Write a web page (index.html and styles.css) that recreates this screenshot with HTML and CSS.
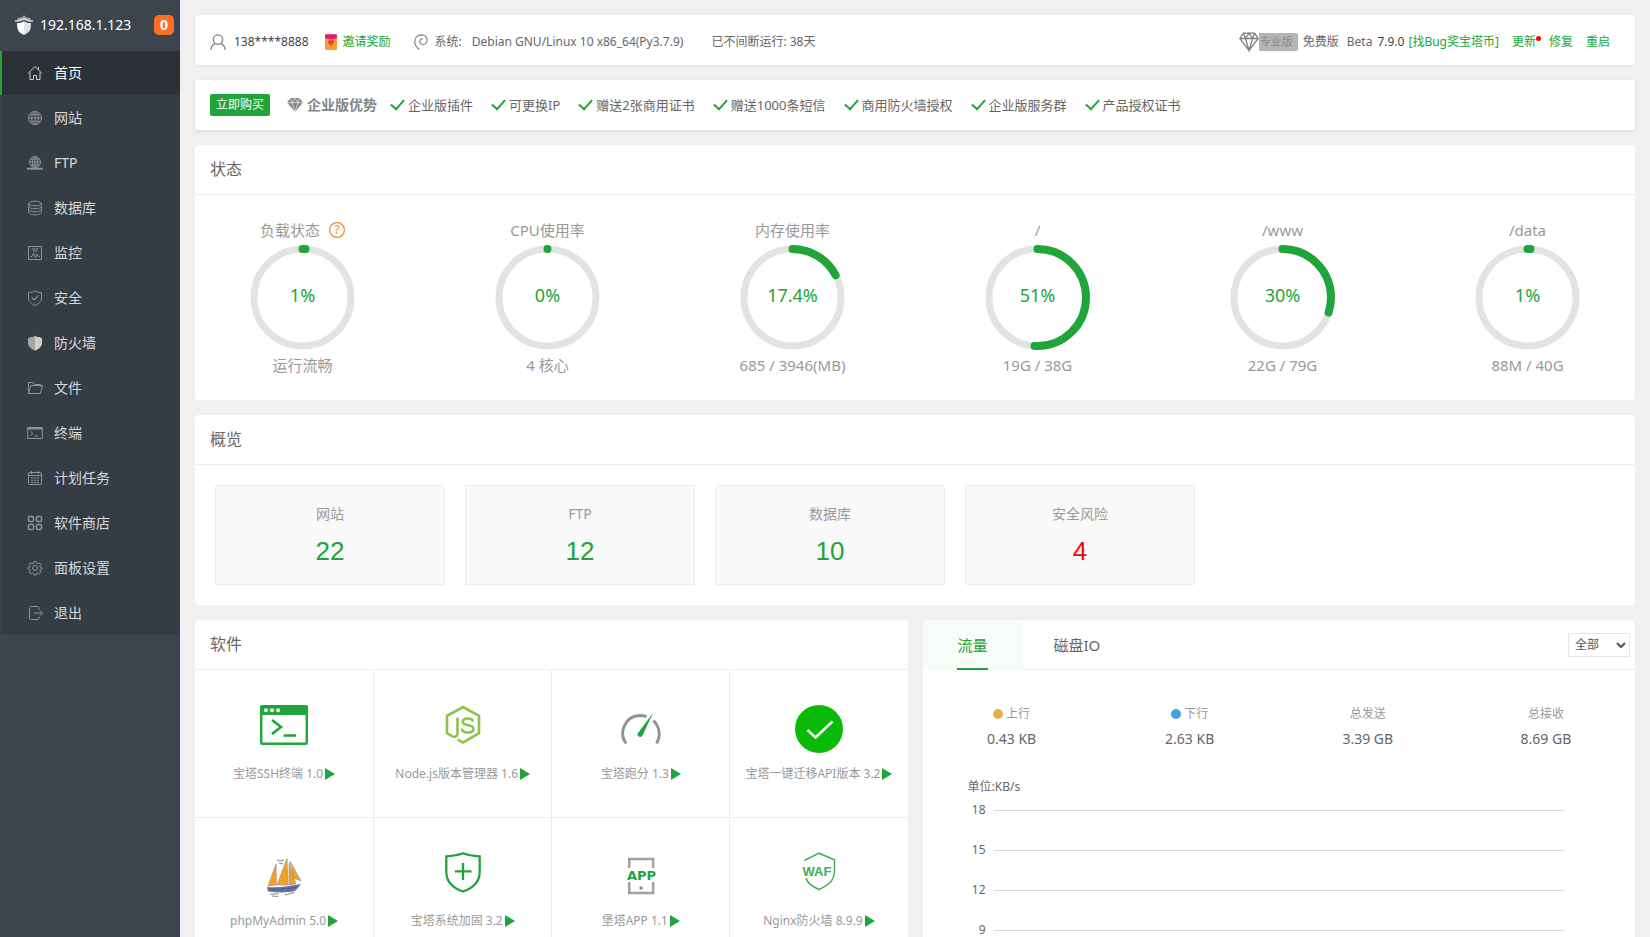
FILE: index.html
```html
<!DOCTYPE html>
<html lang="zh-CN">
<head>
<meta charset="utf-8">
<title>服务器面板</title>
<link rel="stylesheet" href="styles.css">
</head>
<body>
<div class="app">
  <aside class="sidebar">
    <div class="brand">
      <svg class="brand-logo" viewBox="0 0 18 20"><path d="M9 0l1.500 2.200 5 1V5h-13V3.200l5-1z" fill="#a9acaf"/><path d="M0 5.200C4 5.200 6.500 4.300 9 3c2.500 1.300 5 2.200 9 2.200v1.600C14 7 11.500 6.300 9 5 6.500 6.300 4 7 0 6.800z" fill="#c9cbcd"/><path d="M2 8c3 0 5-.5 7-1.800V20c-4-2-6.500-4-6.700-7.500z" fill="#fff"/><path d="M16 8c-3 0-5-.5-7-1.800V20c4-2 6.500-4 6.700-7.500z" fill="#e2e2e2"/></svg>
      <span class="brand-ip">192.168.1.123</span>
      <span class="brand-badge">0</span>
    </div>
    <nav class="menu">
      <a class="menu-item active" href="#"><svg viewBox="0 0 16 16"><path d="M1 8.500 8 1.500l7 7M3 7.500V14.500h3.500v-4h3v4H13V7.500M11.500 2v2.500"/></svg>首页</a>
      <a class="menu-item" href="#"><svg viewBox="0 0 16 16"><circle cx="8" cy="8" r="6.500"/><ellipse cx="8" cy="8" rx="3.300" ry="6.500"/><path d="M1.500 8h13M8 1.500v13M2.500 4.700h11M2.500 11.300h11"/></svg>网站</a>
      <a class="menu-item" href="#"><svg viewBox="0 0 16 16"><circle cx="8" cy="7" r="5.500"/><ellipse cx="8" cy="7" rx="2.600" ry="5.500"/><path d="M2.500 7h11M8 1.500v11M3.500 4.200h9M3.500 9.800h9"/><path d="M0 13.700h16" stroke-width="2"/></svg>FTP</a>
      <a class="menu-item" href="#"><svg viewBox="0 0 16 16"><ellipse cx="8" cy="3.500" rx="6.300" ry="2.300"/><path d="M1.700 3.500v9c0 1.300 2.800 2.300 6.300 2.300s6.300-1 6.300-2.300v-9M1.700 6.500C2 7.800 4.500 8.800 8 8.800s6-1 6.300-2.300M1.700 9.500c.3 1.300 2.800 2.300 6.300 2.300s6-1 6.300-2.300"/></svg>数据库</a>
      <a class="menu-item" href="#"><svg viewBox="0 0 16 16"><path d="M1.500 1.500h13v13h-13zM4.500 4h7M6 6h4M3 12l2-.5 1.500-3.500 2 4.500L10 9l1.500 2.500H13"/></svg>监控</a>
      <a class="menu-item" href="#"><svg viewBox="0 0 16 16"><path d="M8 .7c2 1.300 4 1.900 6.500 2V8c0 3.500-2.500 5.800-6.500 7.500C4 13.800 1.500 11.500 1.500 8V2.700C4 2.600 6 2 8 .7z"/><path d="M4.800 7.700 7.200 10l4-4.500" stroke="#bbb"/></svg>安全</a>
      <a class="menu-item" href="#"><svg viewBox="0 0 16 16"><path d="M8 .5 6 2 3.500 2 1 3.500V8c0 3.500 3 6 7 7.800z" fill="#a5a5a1" stroke="none"/><path d="M8 .5 10 2l2.500 0L15 3.500V8c0 3.500-3 6-7 7.800z" fill="#cfcfc8" stroke="none"/></svg>防火墙</a>
      <a class="menu-item" href="#"><svg viewBox="0 0 16 16"><path d="M1.500 13.500v-11h4.500l1.500 2h6v2M1.500 13.500 4 5.500h11.500L13.500 13.500z"/></svg>文件</a>
      <a class="menu-item" href="#"><svg viewBox="0 0 16 16"><path d="M.7 2.500h14.600v11H.7zM3.500 6.500 6 8.500l-2.500 2M7.500 11H11"/><path d="M.7 3.500h14.600" stroke-width="2"/></svg>终端</a>
      <a class="menu-item" href="#"><svg viewBox="0 0 16 16"><rect x="1.500" y="2.500" width="13" height="12" rx="1.500"/><path d="M1.500 5.500h13M4.500 1v3M11.500 1v3"/><path d="M4 8h8M4 10.300h8M4 12.500h8" stroke-dasharray="2 1"/></svg>计划任务</a>
      <a class="menu-item" href="#"><svg viewBox="0 0 16 16"><g stroke-width="1.500"><rect x="1.500" y="1.500" width="5" height="5" rx="1"/><rect x="9.500" y="1.500" width="5" height="5" rx="1"/><rect x="1.500" y="9.500" width="5" height="5" rx="1"/><rect x="9.500" y="9.500" width="5" height="5" rx="1"/></g></svg>软件商店</a>
      <a class="menu-item" href="#"><svg viewBox="0 0 16 16"><circle cx="8" cy="8" r="2.500"/><path d="M6.900 1.500h2.200l.5 1.900 1 .4 1.700-1 1.500 1.500-1 1.700.4 1 1.800.5v1.500l-1.800.6-.4 1 1 1.600-1.500 1.600-1.700-1-1 .4-.5 1.800H6.900l-.5-1.800-1-.4-1.700 1-1.500-1.600 1-1.600-.4-1L1 9V7.500L2.800 7l.4-1-1-1.700 1.500-1.500 1.700 1 1-.4z"/></svg>面板设置</a>
      <a class="menu-item" href="#"><svg viewBox="0 0 16 16"><path d="M12 4.500v-2L11 1.500H3.500l-1 1v11l1 1H11l1-1v-2M7 8h8.500M13 5.500 15.500 8 13 10.500"/></svg>退出</a>
    </nav>
  </aside>

  <main class="main">
    <header class="card topbar">
      <div class="topbar-group">
        <svg class="icon-user" viewBox="0 0 16 16"><circle cx="8" cy="5.500" r="4.700"/><path d="M.8 16c.2-3 2-5.500 4.500-6.500M15.200 16c-.2-3-2-5.500-4.500-6.500"/></svg>
        <span class="account">138****8888</span>
        <a class="link invite" href="#"><svg viewBox="0 0 12 16"><rect y="1" width="12" height="15" rx="1.500" fill="#f5a02c"/><path d="M0 4V1.500C0 .7.700.3 1.500.3h9c.8 0 1.500.4 1.500 1.200V4C8 5.800 4 5.800 0 4z" fill="#e9176b"/><path d="M3.500 6.500h5v2.300L6 12 3.500 8.800z" fill="#e9174f"/><path d="M6 7.500v3" stroke="#f5a02c"/></svg>邀请奖励</a>
      </div>
      <div class="topbar-group sys">
        <svg class="icon-os" viewBox="0 0 14 16"><path d="M5.500 15.500C2 13 .6 10.500.8 7.200 1 3.500 3.800.9 7.500.8c3.600 0 5.700 2.500 5.600 5.500-.1 2.500-2 4.200-4 4.200-2.200 0-3.300-1.500-3.200-3.200.1-1.600 1.300-2.500 2.800-2.400"/></svg>
        <span>系统:</span><span class="os-name">Debian GNU/Linux 10 x86_64(Py3.7.9)</span>
      </div>
      <span>已不间断运行: 38天</span>
      <div class="topbar-right">
        <button class="pro" type="button"><svg viewBox="0 0 20 20"><path d="M4.500 1.200h11l3.700 5.300L10 18.500.8 6.500zM.8 6.500h18.400M4.500 1.200 6.500 6.500 10 18.500 13.500 6.500l2-5.300M6.500 6.500 10 1.200l3.500 5.300"/></svg><span>专业版</span></button>
        <span class="edition">免费版</span>
        <span class="beta">Beta</span>
        <span class="version">7.9.0</span>
        <a class="link bug" href="#">[找Bug奖宝塔币]</a>
        <a class="link update" href="#">更新</a>
        <a class="link repair" href="#">修复</a>
        <a class="link" href="#">重启</a>
      </div>
    </header>

    <section class="card promo">
      <button class="buy" type="button">立即购买</button>
      <strong class="promo-title"><svg viewBox="0 0 16 14"><path d="M3.500 0h9L16 4.500 8 14 0 4.500z" fill="#84868a"/><path d="M0 4.700h16M3.500 0 5 4.700 8 14 11 4.700 12.500 0M5 4.700 8 .5l3 4.200" fill="none" stroke="#fff" stroke-width=".6"/></svg>企业版优势</strong>
      <ul class="perks">
        <li>企业版插件</li><li>可更换IP</li><li>赠送2张商用证书</li><li>赠送1000条短信</li><li>商用防火墙授权</li><li>企业版服务群</li><li>产品授权证书</li>
      </ul>
    </section>

    <section class="card">
      <h2 class="card-title">状态</h2>
      <div class="gauges">
        <div class="gauge"><div class="gauge-name">负载状态<svg class="help" viewBox="0 0 16 16"><circle cx="8" cy="8" r="7.400" fill="none" stroke="#f0882b" stroke-width="1.200"/><text x="8" y="12" text-anchor="middle">?</text></svg></div>
          <div class="dial"><svg viewBox="0 0 105 105"><circle class="track" cx="52.500" cy="52.500" r="48.500"/><circle class="value" cx="52.500" cy="52.500" r="48.500" pathLength="100" stroke-dasharray="1 100"/></svg><b>1%</b></div><div class="gauge-name">运行流畅</div></div>
        <div class="gauge"><div class="gauge-name">CPU使用率</div>
          <div class="dial"><svg viewBox="0 0 105 105"><circle class="track" cx="52.500" cy="52.500" r="48.500"/><circle class="value" cx="52.500" cy="52.500" r="48.500" pathLength="100" stroke-dasharray="0.01 100"/></svg><b>0%</b></div><div class="gauge-name">4 核心</div></div>
        <div class="gauge"><div class="gauge-name">内存使用率</div>
          <div class="dial"><svg viewBox="0 0 105 105"><circle class="track" cx="52.500" cy="52.500" r="48.500"/><circle class="value" cx="52.500" cy="52.500" r="48.500" pathLength="100" stroke-dasharray="17.4 100"/></svg><b>17.4%</b></div><div class="gauge-name">685 / 3946(MB)</div></div>
        <div class="gauge"><div class="gauge-name">/</div>
          <div class="dial"><svg viewBox="0 0 105 105"><circle class="track" cx="52.500" cy="52.500" r="48.500"/><circle class="value" cx="52.500" cy="52.500" r="48.500" pathLength="100" stroke-dasharray="51 100"/></svg><b>51%</b></div><div class="gauge-name">19G / 38G</div></div>
        <div class="gauge"><div class="gauge-name">/www</div>
          <div class="dial"><svg viewBox="0 0 105 105"><circle class="track" cx="52.500" cy="52.500" r="48.500"/><circle class="value" cx="52.500" cy="52.500" r="48.500" pathLength="100" stroke-dasharray="30 100"/></svg><b>30%</b></div><div class="gauge-name">22G / 79G</div></div>
        <div class="gauge"><div class="gauge-name">/data</div>
          <div class="dial"><svg viewBox="0 0 105 105"><circle class="track" cx="52.500" cy="52.500" r="48.500"/><circle class="value" cx="52.500" cy="52.500" r="48.500" pathLength="100" stroke-dasharray="1 100"/></svg><b>1%</b></div><div class="gauge-name">88M / 40G</div></div>
      </div>
    </section>

    <section class="card">
      <h2 class="card-title">概览</h2>
      <div class="overview">
        <div class="stat"><span>网站</span><a href="#">22</a></div>
        <div class="stat"><span>FTP</span><a href="#">12</a></div>
        <div class="stat"><span>数据库</span><a href="#">10</a></div>
        <div class="stat"><span>安全风险</span><a class="danger" href="#">4</a></div>
      </div>
    </section>

    <div class="columns">
      <section class="card">
        <h2 class="card-title soft-title">软件</h2>
        <div class="apps">
          <div class="app-cell"><svg viewBox="0 0 48 48"><rect x="1.200" y="1.200" width="45.600" height="37.600" rx="1" fill="#fff" stroke="#20a53a" stroke-width="2.400"/><path d="M0 1h48v9H0z" fill="#20a53a"/><g fill="#fff"><circle cx="6" cy="5.200" r="2"/><circle cx="12" cy="5.200" r="2"/><circle cx="18" cy="5.200" r="2"/></g><path d="M12 15l9 7-9 7M23.500 30.500H36" fill="none" stroke="#20a53a" stroke-width="2.600"/></svg><span class="app-name">宝塔SSH终端 1.0</span></div>
          <div class="app-cell"><svg viewBox="0 0 48 48"><g fill="none" stroke="#8cc34b" stroke-width="2.600"><path d="M18.500 12.500v15.500c0 3.500-2.500 4.500-5 3.300L8 28.200V10.800L24 2l16 8.800v17.400L24 37.500l-5.500-3.200"/><path d="M34 16.500c-.3-2-2-3-5-3-3.200 0-5.300 1-5.300 3.300 0 5 10.800 1.800 10.800 7 0 2.500-2 3.700-5.500 3.700-4 0-6-1.300-6.300-3.800"/></g></svg><span class="app-name">Node.js版本管理器 1.6</span></div>
          <div class="app-cell"><svg viewBox="0 0 48 48"><path d="M9 38.500C1.500 28 7.500 11 23 10.500c2.500 0 4 .3 6.500 1M36.500 15.500c6 6.500 7.500 15 3 23" fill="none" stroke="#919191" stroke-width="3"/><path d="M36 8 25.500 30.500c-2 3-6 .8-4.700-2.200z" fill="#20a53a"/></svg><span class="app-name">宝塔跑分 1.3</span></div>
          <div class="app-cell"><svg viewBox="0 0 48 48"><circle cx="24" cy="24" r="24" fill="#09bb07"/><path d="M12.500 25l8 7.500 17-16" fill="none" stroke="#fff" stroke-width="2.500"/></svg><span class="app-name">宝塔一键迁移API版本 3.2</span></div>
          <div class="app-cell"><svg viewBox="0 0 48 48"><g fill="#f2a128" stroke="#8d8d8d" stroke-width=".6"><path d="M8 34 16 12l.5 21zM17 33 27 6.500 28 33zM29 33V11l7 21zM30 9l11 20-7-3z"/></g><path d="M7 35c12 1 22-1 34-3-2 3-4 5-6 7-9 2-18 1.500-27 .5z" fill="#6274a8"/><path d="M8 37c10 1 20 0 29-2" fill="none" stroke="#465a90"/><path d="M17 8l4 1 3-1M19 11l4 1M10 42c3 1 5-1 9 0M12 44l6 .5M25 43l9-2.500" fill="none" stroke="#8b8d95" stroke-width="1.200"/></svg><span class="app-name">phpMyAdmin 5.0</span></div>
          <div class="app-cell"><svg viewBox="0 0 48 48"><path d="M24 1.300c5 2 10 2.700 16.700 3V20C40.700 30 34 36 24 39.500 14 36 7.300 30 7.300 20V4.300C14 4 19 3.300 24 1.300z" fill="none" stroke="#20a53a" stroke-width="2.300"/><path d="M24 11v17M16 19.300h16.500" stroke="#20a53a" stroke-width="2.300"/></svg><span class="app-name">宝塔系统加固 3.2</span></div>
          <div class="app-cell"><svg viewBox="0 0 48 48"><path d="M12.200 16V7h24v9M12.200 30v11h24V30" fill="none" stroke="#a5a198" stroke-width="2.500"/><circle cx="24" cy="36" r="1.700" fill="#8c8c8c"/><text class="logo-app" x="24.500" y="28" text-anchor="middle">APP</text></svg><span class="app-name">堡塔APP 1.1</span></div>
          <div class="app-cell"><svg viewBox="0 0 48 48"><path d="M9.500 8.500 24 1.200l15.500 6.600v10c0 9-3 14-15.500 19.700C15 33.500 12 30 11 26" fill="none" stroke="#3cb054" stroke-width="1.500"/><text class="logo-waf" x="22" y="24" text-anchor="middle">WAF</text></svg><span class="app-name">Nginx防火墙 8.9.9</span></div>
        </div>
      </section>

      <section class="card">
        <div class="tabs">
          <button class="tab selected" type="button"><span>流量</span></button>
          <button class="tab" type="button"><span>磁盘IO</span></button>
          <select class="net-filter" aria-label="网卡"><option>全部</option></select>
        </div>
        <div class="net-stats">
          <div class="net"><span><i class="dot up"></i>上行</span><b>0.43 KB</b></div>
          <div class="net"><span><i class="dot down"></i>下行</span><b>2.63 KB</b></div>
          <div class="net"><span>总发送</span><b>3.39 GB</b></div>
          <div class="net"><span>总接收</span><b>8.69 GB</b></div>
        </div>
        <div class="chart">
          <div class="chart-unit">单位:KB/s</div>
          <div class="tick">18</div>
          <div class="tick">15</div>
          <div class="tick">12</div>
          <div class="tick">9</div>
        </div>
      </section>
    </div>
  </main>
</div>
</body>
</html>
```
FILE: styles.css
```css
* { box-sizing: border-box; }
body {
  margin: 0;
  background: #f0f0f0;
  color: #666;
  font: 12px/20px "Noto Sans", "Noto Sans CJK SC", sans-serif;
}
a { text-decoration: none; color: inherit; }
button, select { font: inherit; border: 0; margin: 0; padding: 0; cursor: pointer; }
ul, h2 { margin: 0; padding: 0; }
svg { display: block; flex: none; }
.app { display: flex; height: 100vh; }

.sidebar { flex: none; width: 180px; background: #3c444d; }
.brand { display: flex; align-items: center; height: 51px; padding: 0 6px 2px 15px; color: #fff; }
.brand-logo { width: 18px; height: 20px; }
.brand-ip { margin-left: 7px; font-size: 14px; }
.brand-badge {
  width: 20px;
  margin-left: auto;
  border-radius: 5px;
  background: #ff6c24;
  font-size: 14px;
  font-weight: 700;
  text-align: center;
}
.menu { display: grid; gap: 1px; background: #353d44; }
.menu-item {
  display: flex;
  align-items: center;
  gap: 11px;
  height: 44px;
  padding-left: 25px;
  border-left: 2px solid #403f3f;
  color: #d8d8d8;
  font-size: 14px;
}
.menu-item svg { width: 16px; height: 16px; fill: none; stroke: #8f9296; stroke-width: 1; }
.menu-item.active { border-color: #20a53a; background: #2c3138; color: #fff; }
.menu-item.active svg { stroke: #d0d0d0; }

.main {
  display: flex;
  flex: 1;
  flex-direction: column;
  gap: 15px;
  min-width: 0;
  padding: 15px;
  overflow: hidden auto;
  scrollbar-width: none;
}
.card { flex: none; border-radius: 4px; background: #fff; }
.card-title {
  height: 50px;
  padding-left: 15px;
  border-bottom: 1px solid #ededed;
  font-size: 16px;
  font-weight: 400;
  line-height: 49px;
}
.link { color: #20a53a; }

.topbar { display: flex; align-items: center; height: 50px; padding: 3px 25px 0 15px; box-shadow: 0 1px 3px rgba(0, 0, 0, .08); white-space: nowrap; }
.topbar-group { display: flex; align-items: center; }
.icon-user { width: 16px; height: 16px; fill: none; stroke: #919191; stroke-width: 1.5; }
.account { margin: 0 16px 0 8px; color: #444; }
.invite { display: flex; align-items: center; gap: 6px; }
.invite svg { width: 12px; height: 16px; }
.sys { margin: 0 28px 0 23px; }
.icon-os { width: 14px; height: 16px; margin-right: 7px; fill: none; stroke: #808080; stroke-width: 1.2; }
.os-name { margin-left: 10px; }
.topbar-right { display: flex; align-items: center; margin-left: auto; }
.pro { display: flex; align-items: center; margin-right: 5px; background: none; color: #8a8a8a; }
.pro svg { width: 20px; height: 20px; fill: #fff; stroke: #808080; stroke-width: 1.3; }
.pro span { height: 18px; padding: 0 5px 0 1px; border-radius: 0 2px 2px 0; background: #b5b5b5; font-size: 11px; line-height: 18px; }
.beta { margin: 0 5px 0 8px; }
.version { margin-right: 4px; color: #444; }
.bug { margin-right: 13px; }
.update { position: relative; margin-right: 13px; }
.update::after { content: ""; position: absolute; top: 4px; right: -5px; width: 5px; height: 5px; border-radius: 50%; background: #f00; }
.repair { margin-right: 13px; }

.promo { display: flex; align-items: center; height: 50px; padding: 0 15px; border-radius: 0; box-shadow: 0 1px 3px rgba(0, 0, 0, .12); white-space: nowrap; }
.buy { height: 22px; padding: 0 6px; border-radius: 2px; background: #20a53a; color: #fff; }
.promo-title { display: flex; align-items: center; gap: 4px; margin: 0 14px 0 17px; color: #84868a; font-size: 14px; font-weight: 700; }
.promo-title svg { width: 16px; height: 14px; }
.perks { display: flex; gap: 19px; list-style: none; font-size: 13px; }
.perks li { display: flex; align-items: center; gap: 4px; }
.perks li::before { content: ""; width: 11px; height: 6px; border: solid #20a53a; border-width: 0 0 2px 2px; transform: translateY(-2px) rotate(-48deg); }

.gauges { display: grid; grid-template-columns: repeat(6, 1fr); margin: 0 -15px; padding: 25px 0; }
.gauge { display: grid; justify-items: center; gap: 5px; }
.gauge-name { display: flex; align-items: center; gap: 9px; height: 20px; color: #999; font-size: 15px; }
.help { width: 16px; height: 16px; }
.help text { fill: #f0882b; font-size: 12px; }
.dial { display: grid; place-items: center; }
.dial svg, .dial b { grid-area: 1 / 1; }
.dial svg { width: 105px; height: 105px; transform: rotate(-90deg); fill: none; }
.dial b { padding-bottom: 6px; color: #20a53a; font-size: 18px; font-weight: 400; }
.track { stroke: #e3e3e3; stroke-width: 7; }
.value { stroke: #20a53a; stroke-width: 8; stroke-linecap: round; }

.overview { display: grid; grid-template-columns: repeat(auto-fill, 230px); gap: 20px; padding: 20px; }
.stat {
  display: grid;
  align-content: start;
  gap: 12px;
  height: 100px;
  padding-top: 18px;
  border: 1px solid #eee;
  border-radius: 2px;
  background: #f9f9f9;
  color: #999;
  font-size: 14px;
  text-align: center;
}
.stat a { color: #20a53a; font: 26px/30px "Liberation Sans", Arial, sans-serif; }
.stat a.danger { color: #f00; }

.columns { display: grid; grid-template-columns: 1fr 1fr; gap: 15px; }
.columns .card { min-width: 0; overflow: hidden; }
.soft-title { border-color: #ececf5; }
.apps { display: grid; grid-template-columns: repeat(4, 1fr); }
.app-cell {
  display: flex;
  flex-direction: column;
  align-items: center;
  gap: 11px;
  height: 148px;
  padding-top: 35px;
  border: solid #ececf5;
  border-width: 0 0 1px 1px;
  margin-bottom: -1px;
  white-space: nowrap;
}
.app-cell:nth-child(4n + 1) { border-left: 0; }
.app-cell:nth-child(n + 5) { border-bottom: 0; }
.app-cell svg { width: 48px; height: 48px; overflow: visible; }
.app-name { display: flex; align-items: center; gap: 2px; color: #999; }
.app-name::after { content: ""; border: solid transparent; border-width: 6px 0 6px 10px; border-left-color: #20a53a; }
.logo-app { fill: #20a53a; font: 700 13px "DejaVu Sans", sans-serif; }
.logo-waf { fill: #3cb054; font: 700 13px "Liberation Sans", sans-serif; }

.tabs { display: flex; align-items: center; height: 50px; padding-right: 5px; border-bottom: 1px solid #ededed; }
.tab { align-self: stretch; min-width: 100px; padding: 0 31px; background: none; color: #666; font-size: 15px; }
.tab span { display: inline-block; height: 50px; line-height: 50px; }
.tab.selected { height: 50px; background: #f7fcf8; color: #20a53a; }
.tab.selected span { border-bottom: 2px solid #20a53a; }
.net-filter { width: 62px; height: 24px; margin-left: auto; padding-left: 2px; border: 1px solid #e6e6e6; background: #fff; color: #555; }
.net-stats { display: grid; grid-template-columns: repeat(4, 1fr); padding-top: 34px; }
.net { display: grid; justify-items: center; gap: 5px; color: #999; }
.net span { display: flex; align-items: center; gap: 3px; }
.net b { color: #666; font-size: 14px; font-weight: 400; }
.dot { width: 10px; height: 10px; border-radius: 50%; }
.up { background: #e8ad4d; }
.down { background: #43a3dc; }
.chart { display: grid; gap: 20px; padding: 28px 71px 40px 45px; }
.chart-unit { margin-bottom: -17px; }
.tick { display: grid; grid-template-columns: 18px 1fr; align-items: center; gap: 8px; text-align: right; }
.tick::after { content: ""; height: 1px; background: #d9d9d9; }
```
